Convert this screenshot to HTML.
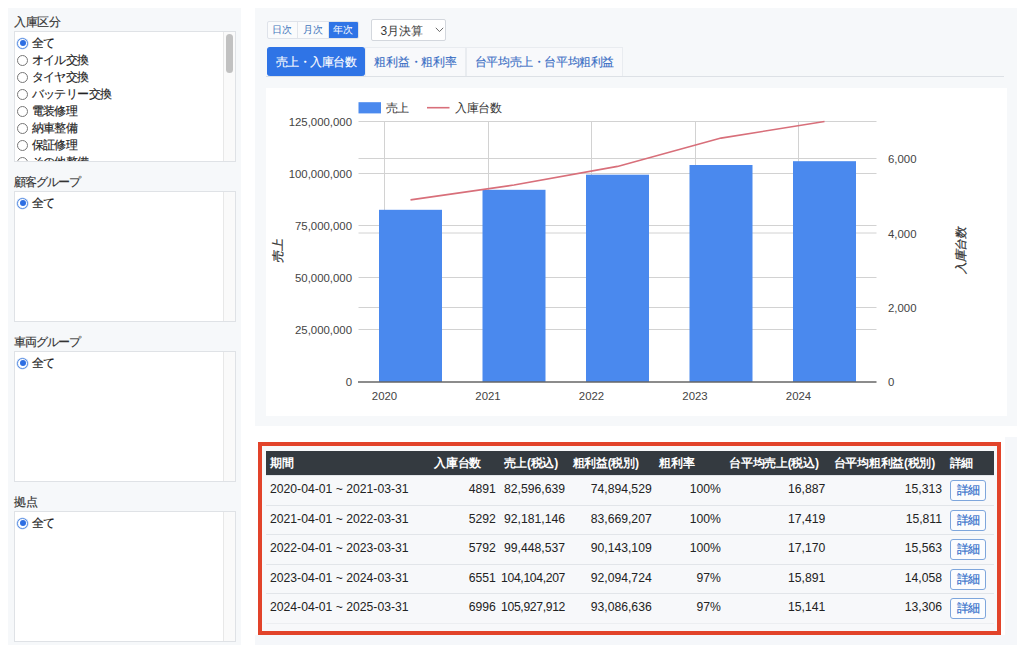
<!DOCTYPE html>
<html lang="ja">
<head>
<meta charset="utf-8">
<style>
*{box-sizing:border-box;margin:0;padding:0}
html,body{width:1024px;height:645px;overflow:hidden;background:#fff}
body{position:relative;font-family:"Liberation Sans",sans-serif;color:#212529;font-size:12px}
.abs{position:absolute}
.panel{position:absolute;background:#f6f8fa}
.lbl{position:absolute;left:14px;font-size:12px;line-height:14px;color:#333;letter-spacing:-0.5px;-webkit-text-stroke:0.15px #333}
.box{position:absolute;left:14px;width:222px;height:131px;background:#fff;border:1px solid #dfe2e6;overflow:hidden}
.track{position:absolute;right:0;top:0;bottom:0;width:12px;background:#fafafa;border-left:1px solid #e8e8e8}
.thumb{position:absolute;left:2px;top:2px;width:7px;height:39px;border-radius:4px;background:#c1c1c1}
.item{position:absolute;left:0;height:17px;line-height:17px;white-space:nowrap;font-size:12px;color:#222}
.rad{position:absolute;left:2.2px;top:3px;width:11px;height:11px;border-radius:50%;border:1px solid #777;background:#fff}
.rad.on{border:1.2px solid #5a8fe3;background:#fff;box-shadow:0 0 0 0.6px #b9d0f5}
.rad.on::after{content:'';position:absolute;left:1.4px;top:1.4px;width:6px;height:6px;border-radius:50%;background:#2d6ee3}
.item span{position:absolute;left:16.6px;top:-0.3px;font-size:12px;letter-spacing:-0.6px;-webkit-text-stroke:0.15px #222}

.btng{position:absolute;left:266.5px;top:21px;height:17.5px;display:flex;border:1px solid #dfe3ea;border-radius:2px;overflow:hidden;background:#fafbfc}
.btng div{height:100%;line-height:16px;font-size:10px;color:#4174bb;text-align:center}
.btng .on{background:#2f74e6;color:#fff}
.sel{position:absolute;left:370.5px;top:19px;width:75px;height:21.5px;background:#fff;border:1px solid #d3d7dd;border-radius:2px;font-size:12px;line-height:22px;padding-left:9px;color:#3a3a3a}
.tabs{-webkit-text-stroke:0.12px currentColor;position:absolute;left:266px;top:47px;width:738px;height:30px;border-bottom:1px solid #dde1e6}
.tab{position:absolute;top:0;height:29px;line-height:27.2px;font-size:11.6px;text-align:center;color:#3a6ec4;background:#f8f9fb;border:1px solid #e9ecf0;border-bottom:none;letter-spacing:-0.5px}
.tab.on{background:#2f74e6;color:#fff;border-color:#2f74e6;border-radius:3px;height:28.8px}
.chart{position:absolute;left:265.5px;top:88px;width:741px;height:327.5px;background:#fff}
svg text{font-family:"Liberation Sans",sans-serif}
.panel2{position:absolute;left:255px;top:437px;width:762px;height:208px;background:#f5f7fa}
.tbl{position:absolute;left:262px;top:446px;width:734.5px;height:185px;background:#f7f8fa}
.thead{position:absolute;left:266px;top:450.5px;width:727.5px;height:24px;background:#343a40}
.th{position:absolute;top:0;line-height:24px;font-size:12px;font-weight:bold;color:#fff;white-space:nowrap;letter-spacing:-0.25px}
.row{position:absolute;left:266px;width:727.5px;height:29.5px;border-top:1px solid #e2e5e9}
.td{position:absolute;top:0;line-height:26.3px;font-size:12.2px;color:#222;white-space:nowrap}
.td.r{text-align:right}
.dbtn{position:absolute;left:683.5px;top:4px;width:36px;height:21px;border:1px solid #7ea6dc;border-radius:3px;background:#fbfcfe;color:#2e6cc9;font-size:12px;line-height:19px;text-align:center;letter-spacing:-1px;-webkit-text-stroke:0.15px #2e6cc9}
.halo{position:absolute;left:253px;top:437px;width:752px;height:198px;background:#fff}
.red{position:absolute;left:258px;top:441.5px;width:743px;height:193.5px;border:4px solid #e2432a}
</style>
</head>
<body>
<!-- LEFT SIDEBAR -->
<div class="panel" style="left:8px;top:8px;width:233px;height:637px"></div>

<div class="lbl" style="top:15px">入庫区分</div>
<div class="box" style="top:31px">
  <div class="item" style="top:3px"><i class="rad on"></i><span>全て</span></div>
  <div class="item" style="top:20px"><i class="rad"></i><span>オイル交換</span></div>
  <div class="item" style="top:37px"><i class="rad"></i><span>タイヤ交換</span></div>
  <div class="item" style="top:54px"><i class="rad"></i><span>バッテリー交換</span></div>
  <div class="item" style="top:71px"><i class="rad"></i><span>電装修理</span></div>
  <div class="item" style="top:88px"><i class="rad"></i><span>納車整備</span></div>
  <div class="item" style="top:105px"><i class="rad"></i><span>保証修理</span></div>
  <div class="item" style="top:122px"><i class="rad"></i><span>その他整備</span></div>
  <div class="track"><div class="thumb"></div></div>
</div>

<div class="lbl" style="top:175px;letter-spacing:-1.1px">顧客グループ</div>
<div class="box" style="top:191px">
  <div class="item" style="top:3px"><i class="rad on"></i><span>全て</span></div>
  <div class="track"></div>
</div>

<div class="lbl" style="top:335px;letter-spacing:-1.1px">車両グループ</div>
<div class="box" style="top:351px">
  <div class="item" style="top:3px"><i class="rad on"></i><span>全て</span></div>
  <div class="track"></div>
</div>

<div class="lbl" style="top:495px">拠点</div>
<div class="box" style="top:511px">
  <div class="item" style="top:3px"><i class="rad on"></i><span>全て</span></div>
  <div class="track"></div>
</div>

<!-- RIGHT TOP PANEL -->
<div class="panel" style="left:255px;top:8px;width:762px;height:418px"></div>


<div class="btng"><div style="width:30px;border-right:1px solid #e3e6eb">日次</div><div style="width:31px;border-right:1px solid #e3e6eb">月次</div><div class="on" style="width:29.5px">年次</div></div>
<div class="sel">3月決算<svg class="abs" style="left:63.5px;top:7px" width="9" height="6" viewBox="0 0 9 6"><path d="M0.8 0.8 L4.5 4.6 L8.2 0.8" fill="none" stroke="#6a6a6a" stroke-width="1"/></svg></div>
<div class="tabs">
  <div class="tab on" style="left:0.5px;width:98.5px">売上・入庫台数</div>
  <div class="tab" style="left:99px;width:101px;letter-spacing:-0.2px">粗利益・粗利率</div>
  <div class="tab" style="left:200px;width:157px;letter-spacing:-0.4px">台平均売上・台平均粗利益</div>
</div>
<div class="chart"></div>
<svg class="abs" style="left:0;top:0;font-size:11.4px" width="1024" height="645" viewBox="0 0 1024 645">
  <g stroke="#d2d2d2" stroke-width="1">
    <line x1="358.5" y1="121.5" x2="876.5" y2="121.5"/>
    <line x1="358.5" y1="173.5" x2="876.5" y2="173.5"/>
    <line x1="358.5" y1="225.5" x2="876.5" y2="225.5"/>
    <line x1="358.5" y1="277.5" x2="876.5" y2="277.5"/>
    <line x1="358.5" y1="329.5" x2="876.5" y2="329.5"/>
    <line x1="358.5" y1="158.5" x2="876.5" y2="158.5"/>
    <line x1="358.5" y1="233" x2="876.5" y2="233"/>
    <line x1="358.5" y1="307.5" x2="876.5" y2="307.5"/>
    <line x1="384.5" y1="121" x2="384.5" y2="382"/>
    <line x1="488.5" y1="121" x2="488.5" y2="382"/>
    <line x1="591.5" y1="121" x2="591.5" y2="382"/>
    <line x1="695.5" y1="121" x2="695.5" y2="382"/>
    <line x1="798.5" y1="121" x2="798.5" y2="382"/>
  </g>
  <g fill="#4a89ee">
    <rect x="379" y="209.8" width="63" height="172.2"/>
    <rect x="482.5" y="189.8" width="63" height="192.2"/>
    <rect x="586" y="174.7" width="63" height="207.3"/>
    <rect x="689.5" y="165" width="63" height="217"/>
    <rect x="793" y="161.2" width="63" height="220.8"/>
  </g>
  <line x1="358" y1="382" x2="876.5" y2="382" stroke="#666" stroke-width="1.3"/>
  <polyline points="410.5,199.9 514,185 617.5,166.4 721,138.1 824.5,121.5" fill="none" stroke="#d86f7a" stroke-width="1.6"/>
  <g font-size="11.4" fill="#444" text-anchor="end">
    <text x="352" y="126">125,000,000</text>
    <text x="352" y="178">100,000,000</text>
    <text x="352" y="230">75,000,000</text>
    <text x="352" y="282">50,000,000</text>
    <text x="352" y="334">25,000,000</text>
    <text x="352" y="386">0</text>
  </g>
  <g font-size="11.4" fill="#444">
    <text x="888" y="163">6,000</text>
    <text x="888" y="237.5">4,000</text>
    <text x="888" y="312">2,000</text>
    <text x="888" y="386">0</text>
  </g>
  <g font-size="11.4" fill="#444" text-anchor="middle">
    <text x="384.5" y="399.5">2020</text>
    <text x="488" y="399.5">2021</text>
    <text x="591.5" y="399.5">2022</text>
    <text x="695" y="399.5">2023</text>
    <text x="798.5" y="399.5">2024</text>
  </g>
  <rect x="358.5" y="102.2" width="22.5" height="11.2" fill="#4a89ee"/>
  <text x="385.5" y="111.5" font-size="12" fill="#333" letter-spacing="-1">売上</text>
  <line x1="427" y1="107.7" x2="449.5" y2="107.7" stroke="#d86f7a" stroke-width="1.6"/>
  <text x="455" y="111.5" font-size="12" fill="#333" letter-spacing="-0.5">入庫台数</text>
  <text transform="translate(281.5,251) rotate(-90) skewX(-12)" text-anchor="middle" font-size="12" fill="#333" stroke="#333" stroke-width="0.25">売上</text>
  <text transform="translate(965,250.5) rotate(-90) skewX(-12)" text-anchor="middle" font-size="12" fill="#333" stroke="#333" stroke-width="0.25">入庫台数</text>
</svg>

<!-- BOTTOM PANEL -->
<div class="panel2"></div>
<div class="halo"></div><div class="tbl"></div>
<div class="thead">
  <div class="th" style="left:4px">期間</div>
  <div class="th" style="left:168px">入庫台数</div>
  <div class="th" style="left:237.5px">売上(税込)</div>
  <div class="th" style="left:306.5px">粗利益(税別)</div>
  <div class="th" style="left:393px">粗利率</div>
  <div class="th" style="left:463px">台平均売上(税込)</div>
  <div class="th" style="left:567.5px">台平均粗利益(税別)</div>
  <div class="th" style="left:683.5px">詳細</div>
</div>
<div class="row" style="top:475.10px"><div class="td" style="left:4px">2020-04-01 ~ 2021-03-31</div><div class="td r" style="right:497.7px">4891</div><div class="td r" style="right:428.5px">82,596,639</div><div class="td r" style="right:341.8px">74,894,529</div><div class="td r" style="right:272.7px">100%</div><div class="td r" style="right:168.2px">16,887</div><div class="td r" style="right:51.5px">15,313</div><div class="dbtn">詳細</div></div>
<div class="row" style="top:504.57px"><div class="td" style="left:4px">2021-04-01 ~ 2022-03-31</div><div class="td r" style="right:497.7px">5292</div><div class="td r" style="right:428.5px">92,181,146</div><div class="td r" style="right:341.8px">83,669,207</div><div class="td r" style="right:272.7px">100%</div><div class="td r" style="right:168.2px">17,419</div><div class="td r" style="right:51.5px">15,811</div><div class="dbtn">詳細</div></div>
<div class="row" style="top:534.04px"><div class="td" style="left:4px">2022-04-01 ~ 2023-03-31</div><div class="td r" style="right:497.7px">5792</div><div class="td r" style="right:428.5px">99,448,537</div><div class="td r" style="right:341.8px">90,143,109</div><div class="td r" style="right:272.7px">100%</div><div class="td r" style="right:168.2px">17,170</div><div class="td r" style="right:51.5px">15,563</div><div class="dbtn">詳細</div></div>
<div class="row" style="top:563.51px"><div class="td" style="left:4px">2023-04-01 ~ 2024-03-31</div><div class="td r" style="right:497.7px">6551</div><div class="td r" style="right:428.5px;letter-spacing:-0.35px">104,104,207</div><div class="td r" style="right:341.8px">92,094,724</div><div class="td r" style="right:272.7px">97%</div><div class="td r" style="right:168.2px">15,891</div><div class="td r" style="right:51.5px">14,058</div><div class="dbtn">詳細</div></div>
<div class="row" style="top:592.98px"><div class="td" style="left:4px">2024-04-01 ~ 2025-03-31</div><div class="td r" style="right:497.7px">6996</div><div class="td r" style="right:428.5px;letter-spacing:-0.35px">105,927,912</div><div class="td r" style="right:341.8px">93,086,636</div><div class="td r" style="right:272.7px">97%</div><div class="td r" style="right:168.2px">15,141</div><div class="td r" style="right:51.5px">13,306</div><div class="dbtn">詳細</div></div>
<div class="abs" style="left:266px;top:622.9px;width:727.5px;height:1px;background:#eceef1"></div>
<div class="red"></div>
</body>
</html>
